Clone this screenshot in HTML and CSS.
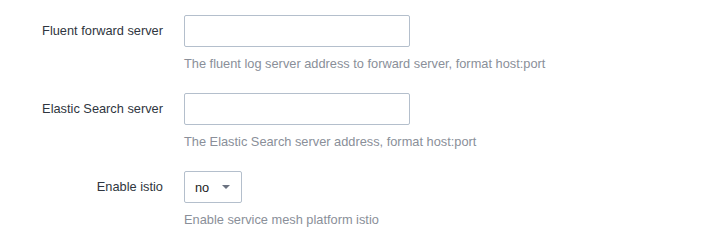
FILE: index.html
```html
<!DOCTYPE html>
<html>

<head>
    <meta name="viewport" content="width=device-width, initial-scale=1.0" />
    <title>Logging settings</title>
    <link rel="stylesheet" href="styles.css">
</head>

<body>
    <form class="settings-form">
        <!-- FLUENT -->
        <div class="form-item">
            <label class="form-label" for="fluent">Fluent forward server</label>
            <div class="form-content">
                <input class="text-input" id="fluent" type="text" autocomplete="off" />
                <div class="form-help">The fluent log server address to forward server, format host:port</div>
            </div>
        </div>

        <!-- ELASTIC -->
        <div class="form-item">
            <label class="form-label" for="elastic">Elastic Search server</label>
            <div class="form-content">
                <input class="text-input" id="elastic" type="text" autocomplete="off" />
                <div class="form-help">The Elastic Search server address, format host:port</div>
            </div>
        </div>

        <!-- ISTIO -->
        <div class="form-item">
            <label class="form-label">Enable istio</label>
            <div class="form-content">
                <div class="select-box">
                    <span class="select-value">no</span>
                    <span class="select-arrow"></span>
                </div>
                <div class="form-help">Enable service mesh platform istio</div>
            </div>
        </div>
    </form>
</body>

</html>
```

FILE: styles.css
```css
body {
    margin: 0;
    background-color: #fff;
    font-family: "Liberation Sans", Arial, sans-serif;
    font-size: 12.8px;
    color: #333;
}

.settings-form {
    padding-top: 15px;
}

.form-item {
    display: flex;
    margin-bottom: 19px;
}

.form-label {
    width: 184px;
    padding-right: 21px;
    box-sizing: border-box;
    text-align: right;
    line-height: 32px;
    color: #2f3640;
}

.form-content {
    display: flex;
    flex-direction: column;
    align-items: flex-start;
}

.text-input {
    width: 226px;
    height: 32px;
    box-sizing: border-box;
    border: 1px solid #b4bfcc;
    border-radius: 2px;
    padding: 0 8px;
    margin: 0;
    font: inherit;
}

.text-input:focus {
    outline: none;
    border-color: #4a90e2;
}

.form-help {
    margin-top: 7px;
    line-height: 20px;
    color: #8a8f99;
}

.select-box {
    width: 58px;
    height: 32px;
    box-sizing: border-box;
    border: 1px solid #b4bfcc;
    border-radius: 2px;
    display: flex;
    align-items: center;
    justify-content: space-between;
    padding: 0 11px 0 10px;
    cursor: pointer;
}

.select-value {
    color: #222;
}

.select-arrow {
    width: 0;
    height: 0;
    border-left: 4px solid transparent;
    border-right: 4px solid transparent;
    border-top: 4px solid #6b7280;
}
```
